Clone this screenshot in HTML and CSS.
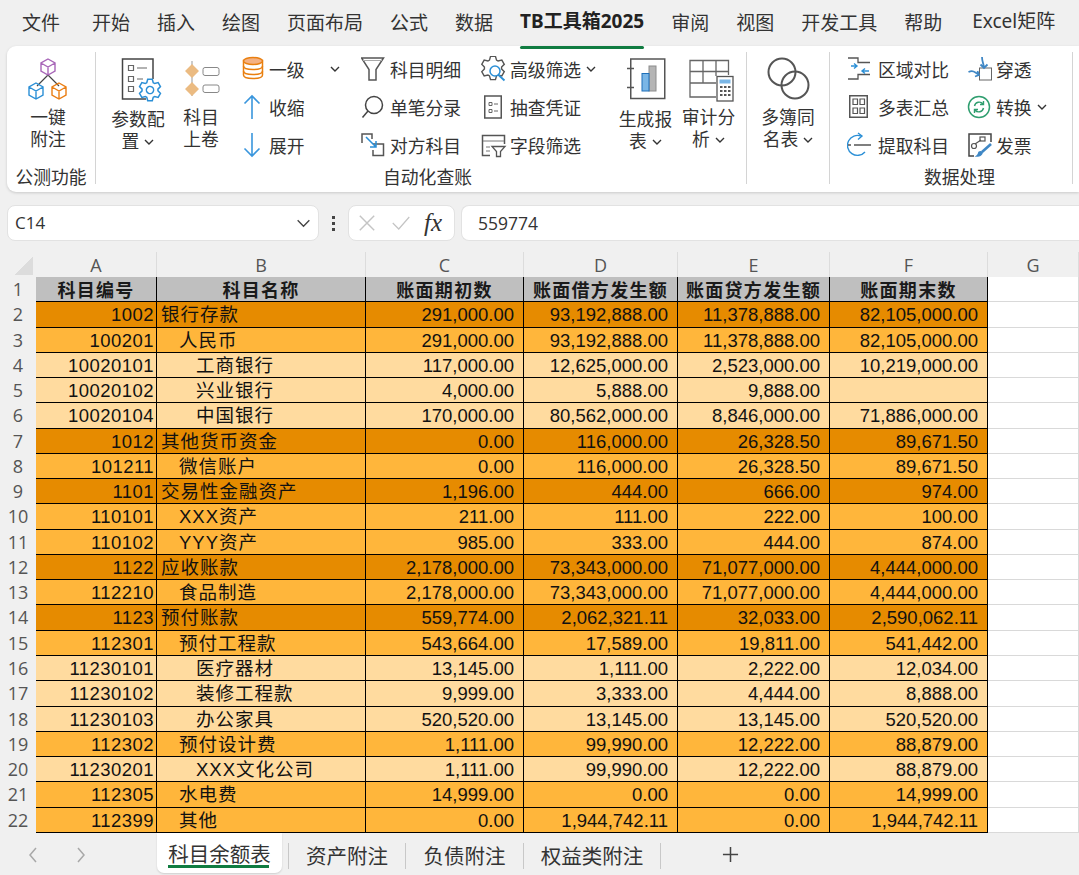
FILE: index.html
```html
<!DOCTYPE html>
<html lang="zh-CN">
<head>
    <meta charset="UTF-8">
    <meta name="viewport" content="width=device-width, initial-scale=1.0">
    <title>科目余额表</title>
    <link rel="stylesheet" href="styles.css">
</head>
<body>
    <svg class="defs" width="0" height="0">
      <symbol id="cube" viewBox="-9 -9 18 18">
        <path d="M0-8 7-4V4L0 8-7 4V-4ZM-7-4 0 0 7-4M0 0V8" fill="none" stroke="currentColor" stroke-width="1.4"/>
      </symbol>
      <symbol id="chev" viewBox="0 0 10 6">
        <path d="M1 1 5 5 9 1" fill="none" stroke="#333" stroke-width="1.4"/>
      </symbol>
    </svg>

    <nav class="menu">
      <span class="first">文件</span>
      <span>开始</span>
      <span>插入</span>
      <span>绘图</span>
      <span>页面布局</span>
      <span>公式</span>
      <span>数据</span>
      <span class="active">TB工具箱2025</span>
      <span>审阅</span>
      <span>视图</span>
      <span>开发工具</span>
      <span>帮助</span>
      <span class="last">Excel矩阵</span>
    </nav>

    <div class="ribbon">
      <section class="group g-note">
        <div class="group-body">
          <div class="large w-note">
            <svg class="icon-l" viewBox="29 56 50 48">
              <path d="M54 75 43 86M54 75 65 86" fill="none" stroke="#444" stroke-width="1.2"/>
              <use href="#cube" x="45" y="58" width="18" height="18" color="#a866b8"/>
              <use href="#cube" x="33" y="82" width="18" height="18" color="#2b8fd6"/>
              <use href="#cube" x="56" y="82" width="18" height="18" color="#ea7d12"/>
            </svg>
            <div class="large-text">一键<br>附注</div>
          </div>
        </div>
        <div class="group-label">公测功能</div>
      </section>
      <div class="sep"></div>

      <section class="group g-auto">
        <div class="group-body">
          <div class="large w-param">
            <svg class="icon-l" viewBox="113 56 50 48">
              <path d="M146 99H122.500V59H153V79" fill="none" stroke="#444" stroke-width="1.5"/>
              <path d="M128.500 65.500h5v5h-5zM128.500 76.500h5v5h-5zM128.500 86.500h5v5h-5zM137 68h10M137 79h6" fill="none" stroke="#666" stroke-width="1.2"/>
              <g transform="translate(150 90) rotate(30)">
                <polygon points="7.31,-3.25 10.76,-2.29 10.76,2.29 7.31,3.25 6.47,4.7 7.36,8.17 3.4,10.46 .84,7.96 -.84,7.96 -3.4,10.46 -7.36,8.17 -6.47,4.7 -7.31,3.25 -10.76,2.29 -10.76,-2.29 -7.31,-3.25 -6.47,-4.7 -7.36,-8.17 -3.4,-10.46 -.84,-7.96 .84,-7.96 3.4,-10.46 7.36,-8.17 6.47,-4.7" fill="#fff" stroke="#2b8fd6" stroke-width="1.5"/>
                <circle r="3.600" fill="none" stroke="#2b8fd6" stroke-width="1.5"/>
              </g>
            </svg>
            <div class="large-text low">参数配<br>置<svg class="chev"><use href="#chev"/></svg></div>
          </div>
          <div class="large w-roll">
            <svg class="icon-l" viewBox="176 56 50 48">
              <path d="M192 61V96" stroke="#999" stroke-width="1"/>
              <path d="M192 64 199 71 192 78 185 71ZM192 82 199 89 192 96 185 89Z" fill="#ebbb82"/>
              <rect x="203" y="67.500" width="16" height="8" rx="2" fill="#fff" stroke="#888"/>
              <rect x="203" y="85" width="16" height="7.500" rx="2" fill="#fff" stroke="#888"/>
            </svg>
            <div class="large-text">科目<br>上卷</div>
          </div>

          <div class="small-col w-level">
            <div class="small">
              <svg class="icon-s" viewBox="240 56 26 26">
                <path d="M242.500 60.500V75c0 2 3 3.500 9.500 3.500s9.500-1.500 9.500-3.500V60.500Z" fill="#fff" stroke="#e97f0f" stroke-width="1.500"/>
                <ellipse cx="252" cy="61" rx="9.500" ry="3.500" fill="#f4b183" stroke="#e97f0f" stroke-width="1.500"/>
                <path d="M242.500 66c0 2 3 3.500 9.500 3.500s9.500-1.500 9.500-3.500M242.500 71c0 2 3 3.500 9.500 3.500s9.500-1.500 9.500-3.500" fill="none" stroke="#e97f0f" stroke-width="1.500"/>
              </svg>
              <span class="gap-27">一级</span>
              <svg class="chev push"><use href="#chev"/></svg>
            </div>
            <div class="small">
              <svg class="icon-s" viewBox="240 94 26 26">
                <path d="M251 119V96M243.500 103.500 251 96 258.500 103.500" fill="none" stroke="#3a96dd" stroke-width="1.600"/>
              </svg>
              <span class="gap-27">收缩</span>
            </div>
            <div class="small">
              <svg class="icon-s" viewBox="240 132 26 26">
                <path d="M251 133V156M243.500 148.500 251 156 258.500 148.500" fill="none" stroke="#3a96dd" stroke-width="1.600"/>
              </svg>
              <span class="gap-27">展开</span>
            </div>
          </div>

          <div class="small-col w-detail">
            <div class="small">
              <svg class="icon-s" viewBox="360 56 26 26">
                <path d="M360.500 58H382.500L375 69.500V80H368V69.500Z" fill="none" stroke="#555" stroke-width="1.500"/>
                <path d="M362 60.500H381" stroke="#aaa"/>
              </svg>
              <span>科目明细</span>
            </div>
            <div class="small">
              <svg class="icon-s" viewBox="360 94 26 26">
                <circle cx="373" cy="105" r="8.500" fill="none" stroke="#444" stroke-width="1.500"/>
                <path d="M367 111 361.500 117.500" stroke="#444" stroke-width="1.500"/>
              </svg>
              <span>单笔分录</span>
            </div>
            <div class="small">
              <svg class="icon-s" viewBox="360 132 26 26">
                <path d="M361 143V134H371V139M372 144H382.500V155.500H372V150" fill="none" stroke="#555" stroke-width="1.500"/>
                <path d="M365 137 375 147M375 141V147H369" fill="none" stroke="#2b8fd6" stroke-width="1.500"/>
              </svg>
              <span>对方科目</span>
            </div>
          </div>

          <div class="small-col w-filter">
            <div class="small">
              <svg class="icon-s" viewBox="480 56 26 26">
                <g transform="translate(492 68) rotate(30) scale(1.080)">
                  <polygon points="7.31,-3.25 10.76,-2.29 10.76,2.29 7.31,3.25 6.47,4.7 7.36,8.17 3.4,10.46 .84,7.96 -.84,7.96 -3.4,10.46 -7.36,8.17 -6.47,4.7 -7.31,3.25 -10.76,2.29 -10.76,-2.29 -7.31,-3.25 -6.47,-4.7 -7.36,-8.17 -3.4,-10.46 -.84,-7.96 .84,-7.96 3.4,-10.46 7.36,-8.17 6.47,-4.7" fill="#fff" stroke="#555" stroke-width="1.300"/>
                </g>
                <circle cx="494" cy="71" r="5" fill="#fff" stroke="#2b8fd6" stroke-width="1.500"/>
                <path d="M497.500 75 503.500 80.500" stroke="#2b8fd6" stroke-width="1.800"/>
              </svg>
              <span>高级筛选</span>
              <svg class="chev"><use href="#chev"/></svg>
            </div>
            <div class="small">
              <svg class="icon-s" viewBox="480 94 26 26">
                <rect x="483.750" y="96" width="16.500" height="22" fill="none" stroke="#555" stroke-width="1.500"/>
                <path d="M488 102.500h3v3h-3zM488 109.500h3v3h-3zM493 104h4M493 111h4" fill="none" stroke="#666"/>
              </svg>
              <span>抽查凭证</span>
            </div>
            <div class="small">
              <svg class="icon-s" viewBox="480 132 26 26">
                <path d="M489 155.500H481.500V135.500H503.500V144" fill="none" stroke="#555" stroke-width="1.500"/>
                <path d="M482 141H503M485 147H489M485 151H489" stroke="#777"/>
                <path d="M491 146.500H504L499.500 151.500V156.500H495.500V151.500Z" fill="#fff" stroke="#555" stroke-width="1.300"/>
              </svg>
              <span>字段筛选</span>
            </div>
          </div>

          <div class="large w-report">
            <svg class="icon-l" viewBox="616 56 50 48">
              <rect x="625.750" y="59" width="34" height="39.500" fill="none" stroke="#555" stroke-width="1.500"/>
              <path d="M622 68.500H629M622 87.500H629" stroke="#555" stroke-width="1.300"/>
              <rect x="644" y="66" width="7" height="25" fill="#b5b5b5" stroke="#8c8c8c"/>
              <rect x="637" y="73.500" width="7" height="17.500" fill="#7ab6e6" stroke="#1e6fb8"/>
            </svg>
            <div class="large-text low">生成报<br>表<svg class="chev"><use href="#chev"/></svg></div>
          </div>
          <div class="large w-audit">
            <svg class="icon-l" viewBox="679 56 50 48">
              <path d="M711 97H685V60.500H723.500V75M685 71.500H723.500M685 83H711M698 60.500V83M711 60.500V76" fill="none" stroke="#666" stroke-width="1.300"/>
              <rect x="712" y="76.500" width="16" height="24.500" fill="#fff" stroke="#555" stroke-width="1.300"/>
              <rect x="714.500" y="79.500" width="11" height="4" fill="#7ab6e6"/>
              <path d="M715 87h2.500M719 87h2.500M723 87h2.500M715 91h2.500M719 91h2.500M723 91h2.500M715 95h2.500M719 95h2.500M723 95h2.500" stroke="#555" stroke-width="2"/>
            </svg>
            <div class="large-text">审计分<br>析<svg class="chev"><use href="#chev"/></svg></div>
          </div>
        </div>
        <div class="group-label">自动化查账</div>
      </section>
      <div class="sep"></div>

      <section class="group g-books">
        <div class="group-body">
          <div class="large w-books">
            <svg class="icon-l" viewBox="763 56 50 48">
              <circle cx="782" cy="72" r="13.500" fill="none" stroke="#555" stroke-width="2"/>
              <circle cx="795" cy="85" r="13.500" fill="none" stroke="#555" stroke-width="2"/>
            </svg>
            <div class="large-text">多簿同<br>名表<svg class="chev"><use href="#chev"/></svg></div>
          </div>
        </div>
        <div class="group-label"></div>
      </section>
      <div class="sep"></div>

      <section class="group g-data">
        <div class="group-body">
          <div class="small-col w-compare">
            <div class="small">
              <svg class="icon-s" viewBox="847 56 26 26">
                <path d="M848 58H858V62.500H870M848 79H858V74.500H870" fill="none" stroke="#555" stroke-width="1.300"/>
                <path d="M851 66H857M854 63.500 857 66 854 68.500M869 71H862M865 68.500 862 71 865 73.500" fill="none" stroke="#2b8fd6" stroke-width="1.400"/>
              </svg>
              <span class="gap-31">区域对比</span>
            </div>
            <div class="small">
              <svg class="icon-s" viewBox="847 94 26 26">
                <rect x="849.750" y="95.750" width="17.500" height="21.500" fill="none" stroke="#555" stroke-width="1.500"/>
                <path d="M853 99h4.500v5.500H853zM860 99h4.500v5.500H860zM853 108h4.500v5.500H853zM860 108h4.500v5.500H860z" fill="none" stroke="#555" stroke-width="1.200"/>
              </svg>
              <span class="gap-31">多表汇总</span>
            </div>
            <div class="small">
              <svg class="icon-s" viewBox="847 132 26 26">
                <path d="M862 136A10 10 0 1 0 866 152M866 152" fill="none" stroke="#2b8fd6" stroke-width="1.400" transform="translate(-1 0)"/>
                <path d="M858 133 862 136 858 139.500" fill="none" stroke="#2b8fd6" stroke-width="1.400"/>
                <path d="M848 145H851M854 145H871" stroke="#555" stroke-width="1.300"/>
              </svg>
              <span class="gap-31">提取科目</span>
            </div>
          </div>

          <div class="small-col w-drill">
            <div class="small">
              <svg class="icon-s" viewBox="967 56 26 26">
                <rect x="979.500" y="68" width="12" height="12" fill="#fff" stroke="#666"/>
                <path d="M982 57C982 62 984 64 984 68M980.500 64.500 984 68 987.500 64.500" fill="none" stroke="#3f87c5" stroke-width="1.800"/>
                <path d="M968.500 72C973 70 975 72 979 75M975 76.500 979 75 977.500 71" fill="none" stroke="#3f87c5" stroke-width="1.800"/>
              </svg>
              <span>穿透</span>
            </div>
            <div class="small">
              <svg class="icon-s" viewBox="967 94 26 26">
                <circle cx="979" cy="107" r="10.500" fill="none" stroke="#2f9e6f" stroke-width="1.500"/>
                <path d="M974.500 106A4.800 4.800 0 0 1 983 104M983.500 101V104.500H980M983.500 108A4.800 4.800 0 0 1 975 110M974.500 113V109.500H978" fill="none" stroke="#2f9e6f" stroke-width="1.400"/>
              </svg>
              <span>转换</span>
              <svg class="chev"><use href="#chev"/></svg>
            </div>
            <div class="small">
              <svg class="icon-s" viewBox="967 132 26 26">
                <path d="M974 156H969V134H991V142" fill="none" stroke="#444" stroke-width="1.500"/>
                <circle cx="974" cy="146" r="2.500" fill="none" stroke="#555" stroke-width="1.200"/>
                <rect x="980" y="137" width="5" height="4" fill="none" stroke="#555" stroke-width="1.200"/>
                <path d="M975 144 981 140" stroke="#555" stroke-width="1.200"/>
                <path d="M991 144 982 152" stroke="#3f87c5" stroke-width="2.600"/>
                <path d="M983 152C981 150 978 151 978 153 977.500 155 976 156 974.500 156.500 978 157.500 982.500 156.500 983 152Z" fill="#3f87c5"/>
              </svg>
              <span>发票</span>
            </div>
          </div>
        </div>
        <div class="group-label">数据处理</div>
      </section>
      <div class="sep"></div>
    </div>

    <div class="formula-bar">
      <div class="name-box">
        <span>C14</span>
        <svg class="name-chev" viewBox="0 0 16 10"><path d="M1.500 1.500 8 8 14.500 1.500" fill="none" stroke="#444" stroke-width="1.500"/></svg>
      </div>
      <div class="dots"><i></i><i></i><i></i></div>
      <div class="fx-box">
        <svg class="fx-mark" viewBox="0 0 20 20"><path d="M2 2 18 18M18 2 2 18" fill="none" stroke="#c4c4c4" stroke-width="1.600"/></svg>
        <svg class="fx-mark" viewBox="0 0 24 20"><path d="M1 10 9 18 23 2" fill="none" stroke="#c4c4c4" stroke-width="1.600"/></svg>
        <span class="fx">fx</span>
      </div>
      <div class="formula-input">559774</div>
    </div>

    <div class="sheet">
      <div class="row head">
        <div class="corner"><div class="corner-mark"></div></div>
        <div class="col-h">A</div><div class="col-h">B</div><div class="col-h">C</div><div class="col-h">D</div><div class="col-h">E</div><div class="col-h">F</div><div class="col-h">G</div>
      </div>
      <div class="row grey"><div class="num">1</div><div class="c t">科目编号</div><div class="c t">科目名称</div><div class="c t">账面期初数</div><div class="c t">账面借方发生额</div><div class="c t">账面贷方发生额</div><div class="c t">账面期末数</div><div class="empty"></div></div>
      <div class="row dark"><div class="num">2</div><div class="c code">1002</div><div class="c name">银行存款</div><div class="c amt">291,000.00</div><div class="c amt">93,192,888.00</div><div class="c amt">11,378,888.00</div><div class="c amt">82,105,000.00</div><div class="empty"></div></div>
      <div class="row mid"><div class="num">3</div><div class="c code">100201</div><div class="c name l1">人民币</div><div class="c amt">291,000.00</div><div class="c amt">93,192,888.00</div><div class="c amt">11,378,888.00</div><div class="c amt">82,105,000.00</div><div class="empty"></div></div>
      <div class="row light"><div class="num">4</div><div class="c code">10020101</div><div class="c name l2">工商银行</div><div class="c amt">117,000.00</div><div class="c amt">12,625,000.00</div><div class="c amt">2,523,000.00</div><div class="c amt">10,219,000.00</div><div class="empty"></div></div>
      <div class="row light"><div class="num">5</div><div class="c code">10020102</div><div class="c name l2">兴业银行</div><div class="c amt">4,000.00</div><div class="c amt">5,888.00</div><div class="c amt">9,888.00</div><div class="c amt"></div><div class="empty"></div></div>
      <div class="row light"><div class="num">6</div><div class="c code">10020104</div><div class="c name l2">中国银行</div><div class="c amt">170,000.00</div><div class="c amt">80,562,000.00</div><div class="c amt">8,846,000.00</div><div class="c amt">71,886,000.00</div><div class="empty"></div></div>
      <div class="row dark"><div class="num">7</div><div class="c code">1012</div><div class="c name">其他货币资金</div><div class="c amt">0.00</div><div class="c amt">116,000.00</div><div class="c amt">26,328.50</div><div class="c amt">89,671.50</div><div class="empty"></div></div>
      <div class="row mid"><div class="num">8</div><div class="c code">101211</div><div class="c name l1">微信账户</div><div class="c amt">0.00</div><div class="c amt">116,000.00</div><div class="c amt">26,328.50</div><div class="c amt">89,671.50</div><div class="empty"></div></div>
      <div class="row dark"><div class="num">9</div><div class="c code">1101</div><div class="c name">交易性金融资产</div><div class="c amt">1,196.00</div><div class="c amt">444.00</div><div class="c amt">666.00</div><div class="c amt">974.00</div><div class="empty"></div></div>
      <div class="row mid"><div class="num">10</div><div class="c code">110101</div><div class="c name l1">XXX资产</div><div class="c amt">211.00</div><div class="c amt">111.00</div><div class="c amt">222.00</div><div class="c amt">100.00</div><div class="empty"></div></div>
      <div class="row mid"><div class="num">11</div><div class="c code">110102</div><div class="c name l1">YYY资产</div><div class="c amt">985.00</div><div class="c amt">333.00</div><div class="c amt">444.00</div><div class="c amt">874.00</div><div class="empty"></div></div>
      <div class="row dark"><div class="num">12</div><div class="c code">1122</div><div class="c name">应收账款</div><div class="c amt">2,178,000.00</div><div class="c amt">73,343,000.00</div><div class="c amt">71,077,000.00</div><div class="c amt">4,444,000.00</div><div class="empty"></div></div>
      <div class="row mid"><div class="num">13</div><div class="c code">112210</div><div class="c name l1">食品制造</div><div class="c amt">2,178,000.00</div><div class="c amt">73,343,000.00</div><div class="c amt">71,077,000.00</div><div class="c amt">4,444,000.00</div><div class="empty"></div></div>
      <div class="row dark"><div class="num">14</div><div class="c code">1123</div><div class="c name">预付账款</div><div class="c amt">559,774.00</div><div class="c amt">2,062,321.11</div><div class="c amt">32,033.00</div><div class="c amt">2,590,062.11</div><div class="empty"></div></div>
      <div class="row mid"><div class="num">15</div><div class="c code">112301</div><div class="c name l1">预付工程款</div><div class="c amt">543,664.00</div><div class="c amt">17,589.00</div><div class="c amt">19,811.00</div><div class="c amt">541,442.00</div><div class="empty"></div></div>
      <div class="row light"><div class="num">16</div><div class="c code">11230101</div><div class="c name l2">医疗器材</div><div class="c amt">13,145.00</div><div class="c amt">1,111.00</div><div class="c amt">2,222.00</div><div class="c amt">12,034.00</div><div class="empty"></div></div>
      <div class="row light"><div class="num">17</div><div class="c code">11230102</div><div class="c name l2">装修工程款</div><div class="c amt">9,999.00</div><div class="c amt">3,333.00</div><div class="c amt">4,444.00</div><div class="c amt">8,888.00</div><div class="empty"></div></div>
      <div class="row light"><div class="num">18</div><div class="c code">11230103</div><div class="c name l2">办公家具</div><div class="c amt">520,520.00</div><div class="c amt">13,145.00</div><div class="c amt">13,145.00</div><div class="c amt">520,520.00</div><div class="empty"></div></div>
      <div class="row mid"><div class="num">19</div><div class="c code">112302</div><div class="c name l1">预付设计费</div><div class="c amt">1,111.00</div><div class="c amt">99,990.00</div><div class="c amt">12,222.00</div><div class="c amt">88,879.00</div><div class="empty"></div></div>
      <div class="row light"><div class="num">20</div><div class="c code">11230201</div><div class="c name l2">XXX文化公司</div><div class="c amt">1,111.00</div><div class="c amt">99,990.00</div><div class="c amt">12,222.00</div><div class="c amt">88,879.00</div><div class="empty"></div></div>
      <div class="row mid"><div class="num">21</div><div class="c code">112305</div><div class="c name l1">水电费</div><div class="c amt">14,999.00</div><div class="c amt">0.00</div><div class="c amt">0.00</div><div class="c amt">14,999.00</div><div class="empty"></div></div>
      <div class="row mid"><div class="num">22</div><div class="c code">112399</div><div class="c name l1">其他</div><div class="c amt">0.00</div><div class="c amt">1,944,742.11</div><div class="c amt">0.00</div><div class="c amt">1,944,742.11</div><div class="empty"></div></div>
    </div>

    <div class="tabbar">
      <div class="tab-nav">
        <svg viewBox="0 0 10 16"><path d="M8 1 2 8 8 15" fill="none" stroke="#a8a8a8" stroke-width="1.500"/></svg>
        <svg viewBox="0 0 10 16"><path d="M2 1 8 8 2 15" fill="none" stroke="#a8a8a8" stroke-width="1.500"/></svg>
      </div>
      <div class="tab-active">科目余额表</div>
      <div class="tab w-117">资产附注</div>
      <div class="tab w-118">负债附注</div>
      <div class="tab w-138 end">权益类附注</div>
      <svg class="tab-add" viewBox="0 0 18 18"><path d="M9 1V17M1 9H17" stroke="#444" stroke-width="1.600"/></svg>
    </div>
</body>
</html>
```

FILE: styles.css
```css
* {
    box-sizing: border-box;
}

html, body {
    height: 100%;
}

body {
    margin: 0;
    width: 1079px;
    height: 875px;
    overflow: hidden;
    background-color: #f0f0f0;
    color: #333;
    font-family: "Noto Sans CJK SC", "Noto Sans", sans-serif;
}

.defs {
    display: block;
    height: 0;
}

/* top menu */
.menu {
    display: flex;
    gap: 27px;
    height: 46px;
    padding: 3px 0 0 22px;
    font-size: 19px;
    line-height: 37px;
    white-space: nowrap;
}

.menu .first {
    margin-right: 5px;
}

.menu .last {
    margin-left: 3px;
    font-family: "Noto Sans", "Noto Sans CJK SC", sans-serif;
}

.menu .active {
    position: relative;
    font-family: "Noto Sans", "Noto Sans CJK SC", sans-serif;
    font-weight: 700;
    color: #222;
}

.menu .active::after {
    content: "";
    position: absolute;
    left: 0;
    right: 0;
    bottom: -3px;
    height: 3px;
    border-radius: 2px;
    background-color: #107c41;
}

/* ribbon */
.ribbon {
    display: flex;
    height: 146px;
    margin-left: 7px;
    background-color: #fff;
    border-radius: 9px 0 0 9px;
    box-shadow: 0 1px 3px rgba(0, 0, 0, 0.16);
    font-size: 17.8px;
    line-height: 22px;
    white-space: nowrap;
}

.sep {
    width: 1px;
    margin: 6px 0 8px;
    background-color: #d4d4d4;
    flex-shrink: 0;
}

.group {
    display: flex;
    flex-direction: column;
    padding-top: 4px;
}

.group-body {
    display: flex;
    height: 115px;
}

.group-label {
    height: 22px;
    text-align: center;
}

.g-note { width: 88px; }
.g-auto { width: 650px; padding-left: 13px; }
.g-books { width: 82px; }
.g-data { width: 242px; padding-left: 17px; }

.large {
    display: flex;
    flex-direction: column;
    align-items: center;
    flex-shrink: 0;
    padding-top: 6px;
}

.large-text {
    text-align: center;
    margin-top: 1px;
}

.large-text.low {
    margin-top: 3px;
}

.icon-l {
    width: 50px;
    height: 48px;
    display: block;
}

.w-note { width: 88px; padding-right: 6px; }
.w-param { width: 58px; }
.w-roll { width: 68px; }
.w-level { width: 106px; margin-left: 6px; }
.w-detail { width: 120px; margin-left: 14px; }
.w-filter { width: 133px; }
.w-report { width: 63px; }
.w-audit { width: 63px; }
.w-books { width: 82px; }
.w-compare { width: 120px; }
.w-drill { width: 110px; }

.small-col {
    display: flex;
    flex-direction: column;
    flex-shrink: 0;
}

.small {
    display: flex;
    align-items: center;
    height: 38px;
}

.icon-s {
    width: 26px;
    height: 26px;
    flex-shrink: 0;
}

.small span {
    margin-left: 3px;
}

.small span.gap-27 {
    margin-left: 2px;
}

.small span.gap-31 {
    margin-left: 5px;
}

.chev {
    width: 10px;
    height: 6px;
    margin-left: 5px;
    vertical-align: 3px;
}

.chev.push {
    margin-left: 25px;
}

/* formula bar */
.formula-bar {
    display: flex;
    align-items: stretch;
    height: 36px;
    margin-top: 13px;
    padding-left: 7px;
    font-family: "Open Sans", "Noto Sans", sans-serif;
    font-size: 17px;
    line-height: 34px;
}

.name-box {
    display: flex;
    align-items: center;
    justify-content: space-between;
    width: 312px;
    padding: 0 7px;
    background-color: #fff;
    border: 1px solid #e2e2e2;
    border-radius: 8px;
}

.name-chev {
    width: 15px;
    height: 9px;
}

.dots {
    display: flex;
    flex-direction: column;
    align-items: center;
    justify-content: center;
    gap: 3px;
    width: 29px;
}

.dots i {
    width: 3px;
    height: 3px;
    background-color: #444;
}

.fx-box {
    display: flex;
    align-items: center;
    width: 107px;
    padding-left: 9px;
    background-color: #fff;
    border: 1px solid #e2e2e2;
    border-radius: 8px;
}

.fx-mark {
    width: 18px;
    height: 18px;
    margin-right: 16px;
}

.fx {
    margin-left: -2px;
    font-family: "Liberation Serif", serif;
    font-style: italic;
    font-size: 25px;
    color: #333;
}

.formula-input {
    flex: 1;
    margin-left: 6px;
    padding-left: 16px;
    background-color: #fff;
    border: 1px solid #e2e2e2;
    border-right: 0;
    border-radius: 8px 0 0 8px;
    font-size: 17.5px;
}

/* sheet */
.sheet {
    display: grid;
    grid-template-columns: 36px 121px 209px 158px 154px 152px 158px 91px;
    grid-template-rows: 25px repeat(22, 25.27px);
    height: 581px;
    margin-top: 11px;
    overflow: hidden;
    font-family: "Liberation Sans", "Noto Sans CJK SC", sans-serif;
    font-size: 18.5px;
    color: #111;
}

.row {
    display: contents;
}

.corner {
    display: flex;
    align-items: flex-end;
    justify-content: flex-end;
    padding: 0 3px 2px 0;
    background-color: #f0f0f0;
}

.corner-mark {
    width: 19px;
    height: 19px;
    background: linear-gradient(135deg, transparent 50%, #dcdcdc 50%);
}

.col-h {
    background-color: #f0f0f0;
    border-right: 1px solid #dcdcdc;
    text-align: center;
    font-family: "Open Sans", "Noto Sans", sans-serif;
    font-size: 18px;
    line-height: 26px;
    color: #555;
}

.num {
    background-color: #f0f0f0;
    text-align: center;
    font-family: "Open Sans", "Noto Sans", sans-serif;
    font-size: 18px;
    line-height: 25px;
    color: #555;
}

.c {
    height: 100%;
    min-width: 0;
    border-right: 1px solid #000;
    border-bottom: 1px solid #000;
    line-height: 25px;
    white-space: nowrap;
    overflow: hidden;
}

.empty {
    background-color: #fff;
    border-right: 1px solid #d9d9d9;
    border-bottom: 1px solid #d9d9d9;
}

.grey .c { background-color: #bfbfbf; }
.dark .c { background-color: #e68b00; }
.mid .c { background-color: #ffb63b; }
.light .c { background-color: #ffdb9f; }

.t {
    text-align: center;
    font-family: "Noto Sans CJK SC", sans-serif;
    font-size: 18px;
    font-weight: 700;
    letter-spacing: 1.300px;
    color: #1a1a1a;
}

.code {
    text-align: right;
    padding-right: 2px;
    letter-spacing: 0.450px;
}

.amt {
    text-align: right;
    padding-right: 9px;
}

.name {
    padding-left: 4px;
    letter-spacing: 1px;
}

.name.l1 { padding-left: 22px; }
.name.l2 { padding-left: 39px; }

/* sheet tabs */
.tabbar {
    display: flex;
    align-items: flex-start;
    height: 42px;
    font-size: 20.5px;
    line-height: 24px;
    white-space: nowrap;
}

.tab-nav {
    display: flex;
    gap: 38px;
    width: 157px;
    padding: 14px 0 0 28px;
}

.tab-nav svg {
    width: 10px;
    height: 16px;
}

.tab-active {
    position: relative;
    width: 125px;
    height: 40px;
    margin-right: 6px;
    padding-top: 8px;
    text-align: center;
    background-color: #fff;
    border-radius: 0 0 7px 7px;
    box-shadow: 0 1px 2px rgba(0, 0, 0, 0.14);
}

.tab-active::after {
    content: "";
    position: absolute;
    left: 11px;
    right: 13px;
    top: 32px;
    height: 3px;
    background-color: #107c41;
}

.tab {
    height: 26px;
    margin-top: 10px;
    text-align: center;
    border-left: 1px solid #c8c8c8;
}

.tab.end {
    border-right: 1px solid #c8c8c8;
}

.w-117 { width: 117px; }
.w-118 { width: 118px; }
.w-138 { width: 138px; }

.tab-add {
    width: 17px;
    height: 17px;
    margin: 13px 0 0 61px;
}
```
